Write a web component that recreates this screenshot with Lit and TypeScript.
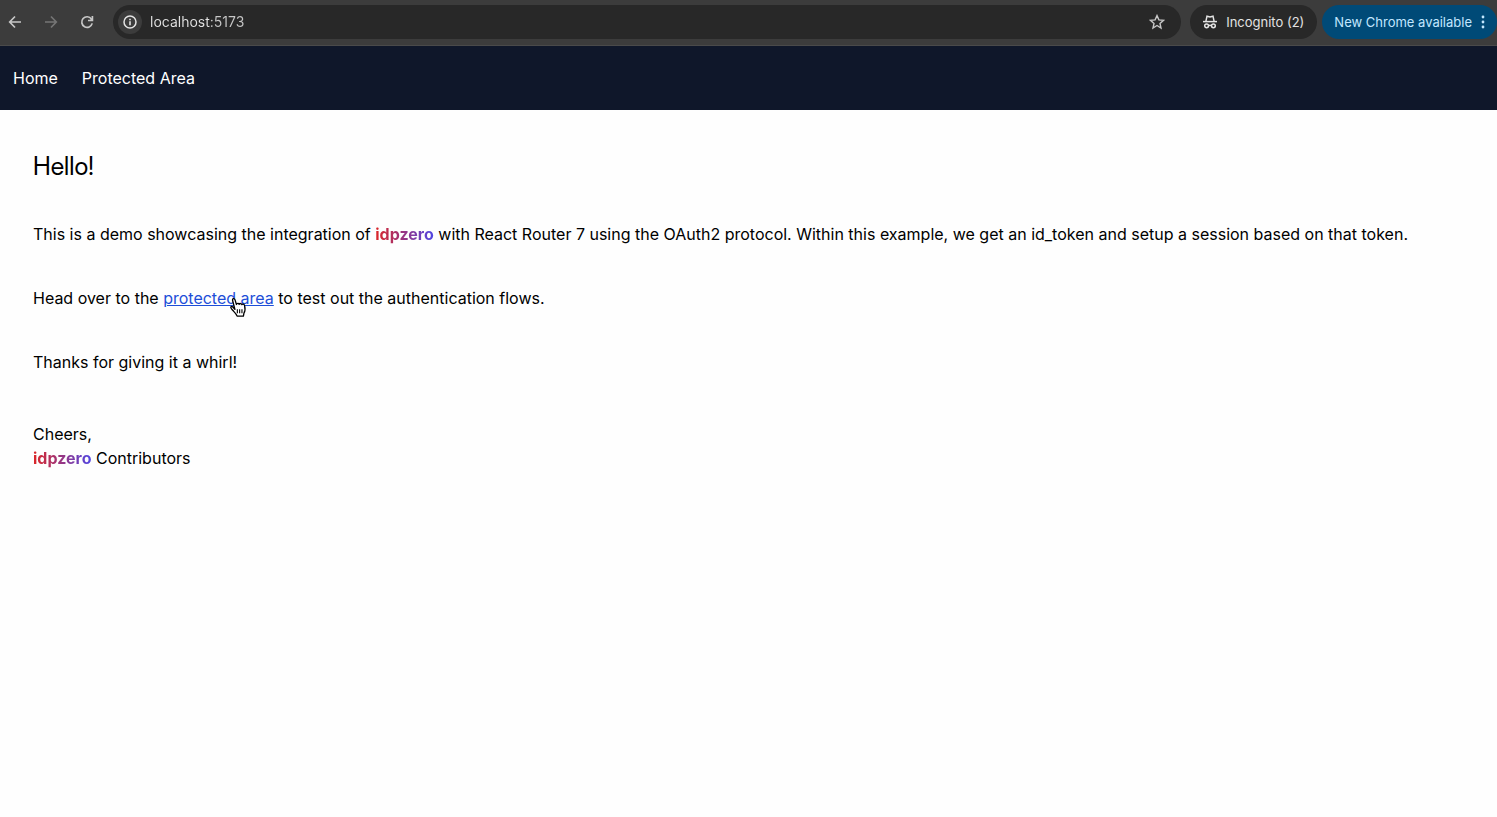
import { LitElement, html, css } from "lit";
import { customElement, property } from "lit/decorators.js";

@customElement("browser-bar")
class BrowserBar extends LitElement {
  @property() url = "";

  static styles = css`
    :host {
      display: flex;
      align-items: center;
      padding: 5px 0 6px;
      border-bottom: 1px solid #4a4a4a;
      background: #3c3c3c;
      font-size: 13px;
      color: #e3e3e3;
      overflow: hidden;
    }
    button {
      display: flex;
      align-items: center;
      justify-content: center;
      flex: none;
      margin: 0;
      padding: 0;
      border: 0;
      background: none;
      color: #c7c7c7;
      font: inherit;
      white-space: nowrap;
    }
    svg {
      display: block;
      flex: none;
    }
    .nav {
      display: flex;
      gap: 12px;
      padding: 0 14px 0 3px;
    }
    .nav button {
      width: 24px;
      height: 34px;
    }
    .nav button:disabled {
      color: #757575;
    }
    .omnibox {
      display: flex;
      align-items: center;
      flex: 1;
      min-width: 0;
      height: 34px;
      padding: 0 16px 0 5px;
      border-radius: 17px;
      background: #282828;
    }
    .info {
      width: 24px;
      height: 24px;
      border-radius: 12px;
      background: #3c3c3c;
      color: #e3e3e3;
    }
    input {
      flex: 1;
      min-width: 0;
      padding: 0;
      margin: 0 8px;
      border: 0;
      outline: 0;
      font: inherit;
      font-size: 14px;
      line-height: 20px;
      color: transparent;
      background: linear-gradient(to right, #e3e3e3 60px, #c7c7c7 60px);
      -webkit-background-clip: text;
      background-clip: text;
    }
    .incognito {
      gap: 8px;
      height: 34px;
      margin-left: 9px;
      padding: 0 13px 0 12px;
      border-radius: 17px;
      background: #282828;
      color: #e3e3e3;
    }
    .update {
      gap: 3px;
      height: 34px;
      margin-left: 5px;
      padding: 0 6px 0 12px;
      border-radius: 17px;
      background: #004a77;
      color: #c2e7ff;
    }
  `;

  render() {
    return html`
      <div class="nav">
        <button aria-label="Back">
          <svg width="16" height="16" viewBox="0 0 16 16" fill="none" stroke="currentColor" stroke-width="1.7"><path d="M14 8H3M8 2.5 2.7 8 8 13.5" /></svg>
        </button>
        <button aria-label="Forward" disabled>
          <svg width="16" height="16" viewBox="0 0 16 16" fill="none" stroke="currentColor" stroke-width="1.7"><path d="M2 8h11M8 2.5 13.3 8 8 13.5" /></svg>
        </button>
        <button aria-label="Reload">
          <svg width="16" height="16" viewBox="0 0 16 16" fill="none" stroke="currentColor" stroke-width="1.7"><path d="M13.2 9.4A5.3 5.3 0 1 1 12.4 5" /><path d="M13.4 2v4.5H9" /><path d="M10.8 6.2 13 4v2.2z" fill="currentColor" stroke="none" /></svg>
        </button>
      </div>
      <div class="omnibox">
        <button class="info" aria-label="View site information">
          <svg width="16" height="16" viewBox="0 0 16 16"><circle cx="8" cy="8" r="6" fill="none" stroke="currentColor" stroke-width="1.5" /><path d="M7.2 7.2h1.6v4H7.2zM7.2 4.7h1.6v1.6H7.2z" fill="currentColor" /></svg>
        </button>
        <input type="text" aria-label="Address" spellcheck="false" .value=${this.url} />
        <button aria-label="Bookmark this tab">
          <svg width="16" height="16" viewBox="0 0 16 16" fill="none" stroke="currentColor" stroke-width="1.4"><path d="m8 1.6 1.9 4.3 4.6.4-3.5 3.1 1 4.6L8 11.5 4 14l1-4.6-3.5-3.1 4.6-.4z" /></svg>
        </button>
      </div>
      <button class="incognito">
        <svg width="16" height="16" viewBox="0 0 16 16" fill="none" stroke="currentColor" stroke-width="1.5"><path d="M1 7.6h14" /><path d="M3.9 7.4 5 2.2l3 .7 3-.7 1.1 5.2" /><circle cx="4.6" cy="11.8" r="1.9" /><circle cx="11.4" cy="11.8" r="1.9" /><path d="M6.5 11.6q1.5-.9 3 0" /></svg>
        <span>Incognito (2)</span>
      </button>
      <button class="update">
        <span>New Chrome available</span>
        <svg width="16" height="16" viewBox="0 0 16 16" fill="currentColor"><circle cx="8" cy="3" r="1.4" /><circle cx="8" cy="8" r="1.4" /><circle cx="8" cy="13" r="1.4" /></svg>
      </button>
    `;
  }
}

@customElement("app-root")
class AppRoot extends LitElement {
  static styles = css`
    :host {
      display: block;
      min-height: 100vh;
      background: #fefefe;
      color: #000;
      font-family: Inter, sans-serif;
      font-size: 16px;
      line-height: 24px;
    }
    .menu {
      display: flex;
      align-items: center;
      gap: 24px;
      height: 64px;
      padding: 0 13px;
      background: #0f172a;
    }
    .menu a {
      color: #fff;
      text-decoration: none;
    }
    main {
      display: flex;
      flex-direction: column;
      gap: 40px;
      padding: 40px 33px;
    }
    h1,
    p {
      margin: 0;
    }
    h1 {
      font-family: "Inter Display", Inter, sans-serif;
      font-size: 25px;
      line-height: 32px;
      font-weight: 400;
    }
    .closing {
      padding-top: 8px;
    }
    .brand {
      font-weight: 700;
      color: transparent;
      background: linear-gradient(to right, #dc2626, #4f46e5);
      -webkit-background-clip: text;
      background-clip: text;
    }
    .link {
      position: relative;
      color: #1d4ed8;
      text-decoration: underline;
    }
    .pointer {
      position: absolute;
      top: 8px;
      right: 26px;
    }
  `;

  render() {
    const brand = html`<strong class="brand">idpzero</strong>`;
    return html`
      <browser-bar url="localhost:5173"></browser-bar>
      <nav class="menu">
        <a href="#home">Home</a>
        <a href="#protected">Protected Area</a>
      </nav>
      <main>
        <h1>Hello!</h1>
        <p>
          This is a demo showcasing the integration of ${brand} with React Router 7 using the OAuth2 protocol. Within
          this example, we get an id_token and setup a session based on that token.
        </p>
        <p>
          Head over to the
          <a class="link" href="#protected">protected area<svg class="pointer" width="20" height="22" viewBox="0 0 18 20" aria-hidden="true"><path d="M6.2 12.2 4.1 4.1C3.6 2.2 5.8 1.7 6.3 3.5l1.3 4.2C7.8 6.5 9.8 6.3 10.1 7.6c.4-1.1 2.2-1 2.4.3.6-.9 2.2-.5 2.5.8.5 2.1.8 4.7-.6 6.8l-.5 2.8H8.2c-.5-1.9-2.4-3.5-4-5.3-1.6-1.8-2.3-2.4-1.6-3.2 1-1 2.3.6 3.6 2.4z" fill="#fff" stroke="#000" stroke-width="1.2" stroke-linejoin="round" /><path d="M8.4 12v3.6M10.5 12v3.6M12.6 12v3.6" stroke="#000" stroke-width="1" /></svg></a>
          to test out the authentication flows.
        </p>
        <p>Thanks for giving it a whirl!</p>
        <p class="closing">Cheers,<br />${brand} Contributors</p>
      </main>
    `;
  }
}
